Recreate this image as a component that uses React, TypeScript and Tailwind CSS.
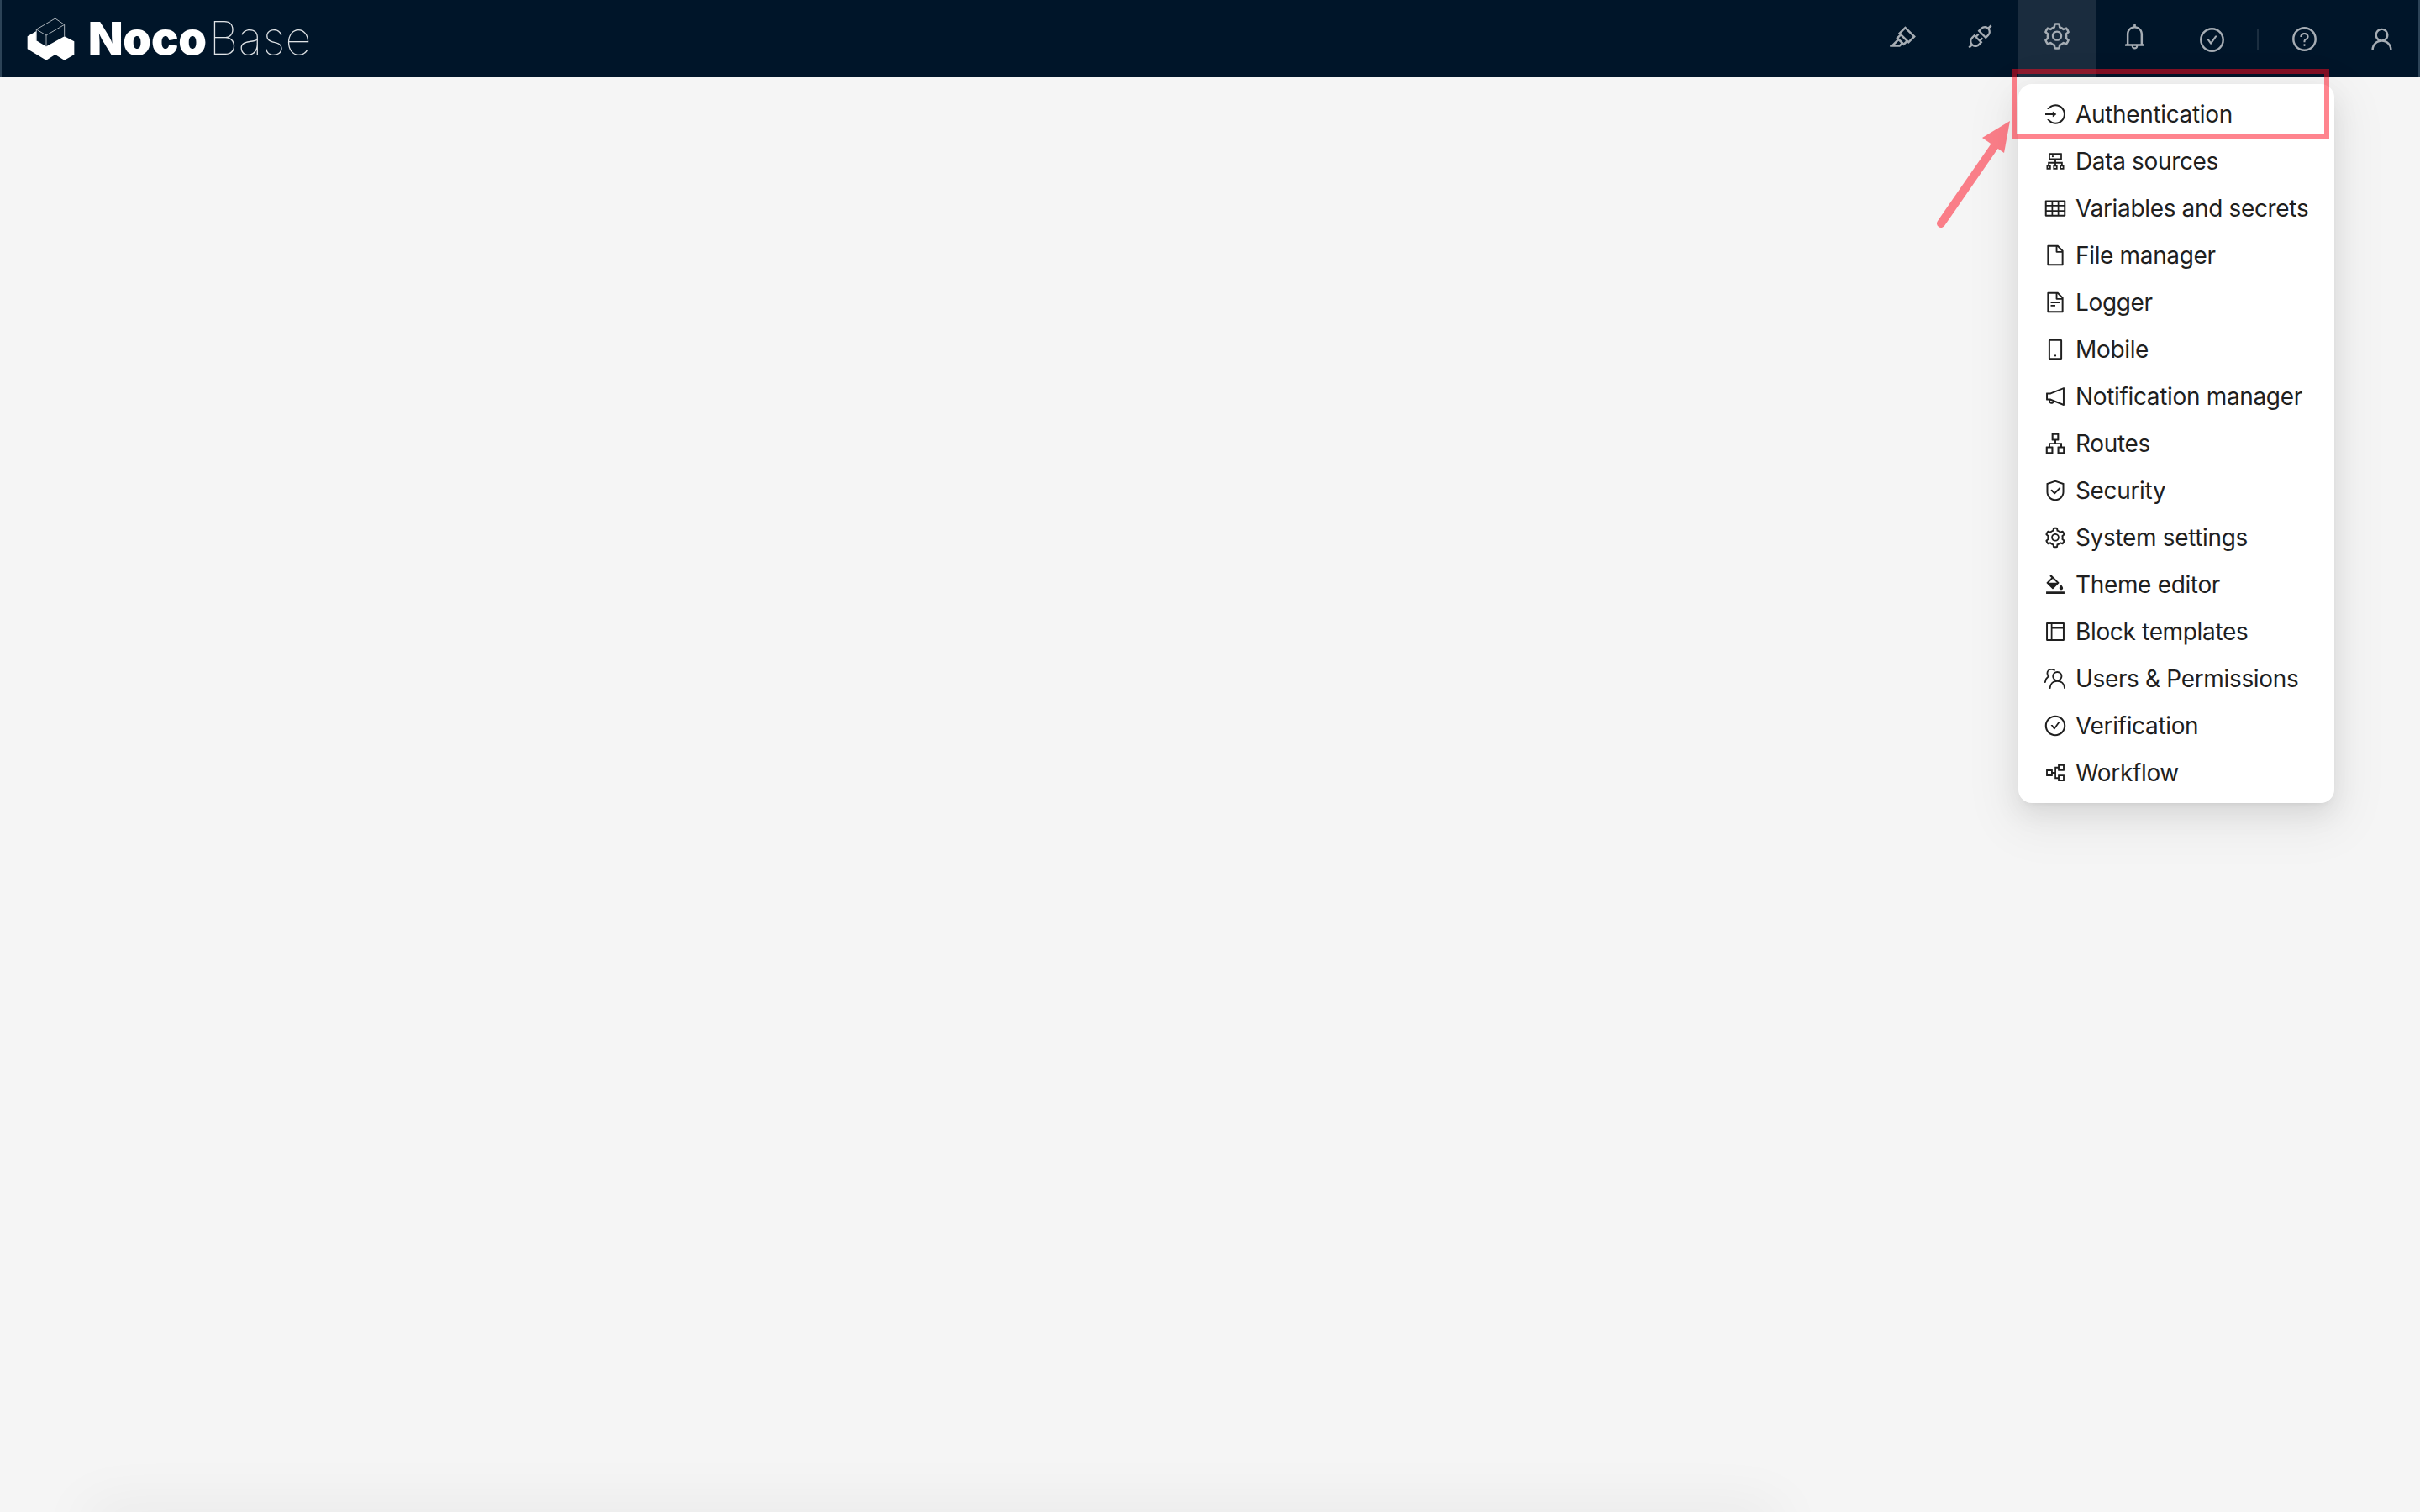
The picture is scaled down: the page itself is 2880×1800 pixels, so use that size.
import React from 'react';
import {
  AiOutlineApartment,
  AiOutlineApi,
  AiOutlineBell,
  AiOutlineBgColors,
  AiOutlineCheckCircle,
  AiOutlineCluster,
  AiOutlineFile,
  AiOutlineFileText,
  AiOutlineHighlight,
  AiOutlineLayout,
  AiOutlineLogin,
  AiOutlineMobile,
  AiOutlineNotification,
  AiOutlinePartition,
  AiOutlineQuestionCircle,
  AiOutlineSafety,
  AiOutlineSetting,
  AiOutlineTable,
  AiOutlineUser,
} from 'react-icons/ai';

const UsersIcon = ({ size }: { size: number }) => (
  <svg width={size} height={size} viewBox="0 0 24 24" fill="none" stroke="currentColor" strokeWidth="1.6" strokeLinecap="round">
    <circle cx="14" cy="9.5" r="4.4" />
    <path d="M6.500 21.500c.4-4.400 3.400-7.100 7.500-7.100s7.100 2.700 7.500 7.100" />
    <path d="M11 3.300A4.500 4.500 0 0 0 7.800 2.500c-2.500 0-4 1.900-4 4 0 1.200.5 2.300 1.300 3C3.200 11 2 13.200 1.600 15.500" />
  </svg>
);

const menuItems = [
  { label: 'Authentication', Icon: AiOutlineLogin },
  { label: 'Data sources', Icon: AiOutlineCluster },
  { label: 'Variables and secrets', Icon: AiOutlineTable },
  { label: 'File manager', Icon: AiOutlineFile },
  { label: 'Logger', Icon: AiOutlineFileText },
  { label: 'Mobile', Icon: AiOutlineMobile },
  { label: 'Notification manager', Icon: AiOutlineNotification },
  { label: 'Routes', Icon: AiOutlineApartment },
  { label: 'Security', Icon: AiOutlineSafety },
  { label: 'System settings', Icon: AiOutlineSetting },
  { label: 'Theme editor', Icon: AiOutlineBgColors },
  { label: 'Block templates', Icon: AiOutlineLayout },
  { label: 'Users & Permissions', Icon: UsersIcon },
  { label: 'Verification', Icon: AiOutlineCheckCircle },
  { label: 'Workflow', Icon: AiOutlinePartition },
];

const Logo = () => (
  <svg width="80" height="70" viewBox="0 0 240 210" className="shrink-0">
    <path
      d="M38 97 70 78v34l35 21 65-36 35 18v47l-35 20-33-20-32 20-67-40z"
      fill="#fff"
    />
    <path
      d="M70 72 137 33l33 22-65 38zM105 93v40M70 72v40M170 55v43"
      fill="none"
      stroke="#a9b1b8"
      strokeWidth="3"
      strokeLinejoin="round"
    />
  </svg>
);

const HeaderButton = ({ children, active }: { children: React.ReactNode; active?: boolean }) => (
  <div className={`flex h-full w-[92px] items-center justify-center ${active ? 'bg-[#1a2c3e]' : ''}`}>
    {children}
  </div>
);

const App = () => {
  return (
    <div className="relative h-screen w-full overflow-hidden bg-[#f5f5f5] font-['Inter',sans-serif]">
      <header className="flex h-[92px] items-center justify-between border-x-2 border-[#2c4357] bg-[#001529] text-[#a6adb4]">
        <div className="flex items-center pl-[18px]">
          <Logo />
          <div className="ml-[5px] flex text-[54px] leading-none text-white">
            <span className="font-black tracking-[-0.2px]">Noco</span>
            <span className="ml-[3px] font-thin tracking-[0.4px] text-[#dfe3e6]">Base</span>
          </div>
        </div>

        <div className="-mr-[2px] flex h-full items-center">
          <div className="flex h-full items-center">
            <HeaderButton><AiOutlineHighlight size={35} className="-translate-y-[3px]" /></HeaderButton>
            <HeaderButton><AiOutlineApi size={35} className="-translate-y-[3px]" /></HeaderButton>
            <HeaderButton active><AiOutlineSetting size={36} className="-translate-y-[3px]" /></HeaderButton>
            <HeaderButton><AiOutlineBell size={35} className="-translate-y-[3px]" /></HeaderButton>
            <HeaderButton><AiOutlineCheckCircle size={33} className="translate-y-[1px]" /></HeaderButton>
          </div>
          <div className="mx-2 mt-[2px] h-[26px] w-[2px] bg-[#1b2e40]" />
          <HeaderButton><AiOutlineQuestionCircle size={33} /></HeaderButton>
          <HeaderButton><AiOutlineUser size={33} /></HeaderButton>
        </div>
      </header>

      {/* settings dropdown */}
      <div className="absolute right-[102px] top-[100px] w-[376px] rounded-2xl bg-white py-2 text-[28px] tracking-[-0.34px] text-[#1f1f1f] shadow-[0_12px_32px_rgba(0,0,0,0.08),0_6px_12px_-8px_rgba(0,0,0,0.12),0_18px_56px_16px_rgba(0,0,0,0.05)]">
        {menuItems.map(({ label, Icon }) => (
          <div key={label} className="flex h-14 items-center pl-[30px]">
            <span className="flex w-[28px] shrink-0 justify-center">
              <Icon size={28} />
            </span>
            <span className="ml-[10px] whitespace-nowrap">{label}</span>
          </div>
        ))}
      </div>

      {/* annotation: frame and arrow */}
      <div className="absolute right-[108px] top-[82px] h-[84px] w-[378px] border-[6px] border-[#ff0a1e]/50" />
      <svg className="absolute left-[2290px] top-[130px] opacity-50" width="120" height="150" viewBox="0 0 120 150">
        <path d="M20 136 85 42" stroke="#ff0a1e" strokeWidth="10" strokeLinecap="round" />
        <path d="M102 14 69 34l26 18z" fill="#ff0a1e" />
      </svg>

      {/* faint shadow along the bottom edge */}
      <div className="absolute -bottom-[30px] left-[100px] right-[760px] h-[30px] rounded-full shadow-[0_0_70px_rgba(0,0,0,0.09)]" />
    </div>
  );
};

export default App;
